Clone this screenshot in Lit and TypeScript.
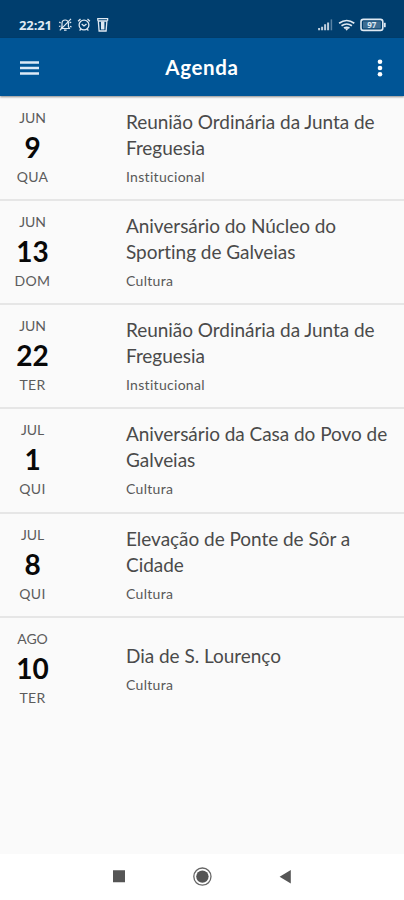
import { LitElement, html, css } from "lit";
import { customElement } from "lit/decorators.js";

interface AgendaEvent {
  month: string;
  day: string;
  weekday: string;
  title: string[];
  category: string;
}

const EVENTS: AgendaEvent[] = [
  { month: "JUN", day: "9", weekday: "QUA", title: ["Reunião Ordinária da Junta de", "Freguesia"], category: "Institucional" },
  { month: "JUN", day: "13", weekday: "DOM", title: ["Aniversário do Núcleo do", "Sporting de Galveias"], category: "Cultura" },
  { month: "JUN", day: "22", weekday: "TER", title: ["Reunião Ordinária da Junta de", "Freguesia"], category: "Institucional" },
  { month: "JUL", day: "1", weekday: "QUI", title: ["Aniversário da Casa do Povo de", "Galveias"], category: "Cultura" },
  { month: "JUL", day: "8", weekday: "QUI", title: ["Elevação de Ponte de Sôr a", "Cidade"], category: "Cultura" },
  { month: "AGO", day: "10", weekday: "TER", title: ["Dia de S. Lourenço"], category: "Cultura" },
];

@customElement("status-bar")
class StatusBar extends LitElement {
  static styles = css`
    :host {
      display: flex;
      justify-content: space-between;
      height: 38px;
      padding: 11px 17px 0 19px;
      box-sizing: border-box;
      background: #003e6e;
      color: #dfe9f2;
    }
    .group { display: flex; align-items: center; height: 27px; }
    .time { width: 39px; font: 700 13px/26px "Open Sans", sans-serif; letter-spacing: -0.1px; }
    svg { display: block; fill: none; stroke: currentColor; }
    .battery-text { font: 700 8px "Open Sans", sans-serif; fill: currentColor; stroke: none; }
  `;
  render() {
    return html`
      <div class="group">
        <span class="time">22:21</span>
        <svg width="52" height="16" viewBox="0 0 52 16">
          <g stroke-width="1.2">
            <path d="M3.2 11.5h8.2l-1-2V6.2a3.2 3.2 0 0 0-6.4 0v3.3zM6 13.2h2.6M1.2 5l1.4 1M1 9.5l1.5-.5M13.2 5l-1.6 1M13.6 10l-1.6-.6M13 1.8L1.8 13.4"></path>
          </g>
          <g stroke-width="1.3">
            <circle cx="26" cy="8" r="4.9"></circle>
            <path d="M20.1 4.2l2.4-2.2M31.9 4.2l-2.4-2.2M23.7 7l2.3 2 2.5-2M22.7 12l-1 1.6M29.3 12l1 1.6"></path>
          </g>
          <g stroke-width="1.3">
            <path d="M39.8 3.8V1.7h9.8v2.1M40.3 4l.8 10h7l.8-10z"></path>
            <path d="M44.7 4.5v8" stroke-width="3.4"></path>
          </g>
        </svg>
      </div>
      <div class="group">
        <svg width="70" height="16" viewBox="0 0 70 16">
          <path d="M2.1 13.3v-2.2M5.1 13.3V9.7M8.1 13.3V7.3M11.1 13.3V5.4" stroke-width="2" opacity=".85"></path>
          <path d="M14.4 13.3V2.4" stroke-width="1.5" opacity=".4"></path>
          <path d="M22.1 6.3q7.6-5.6 15.2 0M24.5 8.8q5.2-3.6 10.4 0M26.9 11.1q2.8-1.6 5.6 0" stroke-width="1.7"></path>
          <path d="M27.8 11.2l1.9 2.5 1.9-2.5z" fill="currentColor" stroke="none"></path>
          <rect x="44" y="2.4" width="21.8" height="11" rx="2.4" stroke-width="1.6"></rect>
          <path d="M67.8 5.8v4.4" stroke-width="1.8"></path>
          <rect x="46" y="4.4" width="17.8" height="7" fill="currentColor" stroke="none" opacity=".28"></rect>
          <text class="battery-text" x="50.2" y="10.9">97</text>
        </svg>
      </div>
    `;
  }
}

@customElement("app-bar")
class AppBar extends LitElement {
  static styles = css`
    :host {
      display: grid;
      grid-template-columns: 60px 1fr 60px;
      align-items: center;
      height: 58px;
      background: #005596;
      color: #fff;
      box-shadow: 0 1px 2px rgba(0, 0, 0, 0.45);
      z-index: 1;
    }
    svg { display: block; }
    .menu { margin: 1px 0 0 20px; }
    .more { justify-self: end; margin: 1px 20px 0 0; }
    h1 { margin: 0; text-align: center; font: 700 20.5px/58px Lato, sans-serif; letter-spacing: 0.65px; }
  `;
  render() {
    return html`
      <svg class="menu" width="20" height="14" viewBox="0 0 20 14">
        <path d="M0 1.4h19M0 7h19M0 12.6h19" stroke="#dce9f6" stroke-width="2.5"></path>
      </svg>
      <h1>Agenda</h1>
      <svg class="more" width="8" height="18" viewBox="0 0 8 18" fill="#fff">
        <circle cx="4" cy="2.8" r="2.3"></circle>
        <circle cx="4" cy="9" r="2.3"></circle>
        <circle cx="4" cy="15.2" r="2.3"></circle>
      </svg>
    `;
  }
}

@customElement("app-root")
class AppRoot extends LitElement {
  static styles = css`
    :host {
      display: flex;
      flex-direction: column;
      width: 404px;
      height: 900px;
      overflow: hidden;
      background: #fafafa;
      font-family: Lato, sans-serif;
    }
    .list { flex: 1; padding-top: 1px; }
    .row {
      display: grid;
      grid-template-columns: 65px 1fr;
      column-gap: 61px;
      align-items: center;
      height: 104.15px;
      box-sizing: border-box;
      border-bottom: 2px solid #e6e6e6;
    }
    .row:last-child { border-bottom-color: transparent; }
    .date { text-align: center; color: #5c5c5c; font-size: 14px; line-height: 20px; margin-top: -1px; }
    .month, .weekday { letter-spacing: -0.1px; }
    .weekday { letter-spacing: 0.3px; }
    .day { color: #080808; font-size: 28px; font-weight: 700; line-height: 39px; }
    .title { color: #4a4a4a; font-size: 19px; line-height: 26px; white-space: nowrap; letter-spacing: -0.04px; }
    .category { margin-top: 6px; color: #585858; font-size: 14px; line-height: 20px; letter-spacing: 0.3px; }
    .nav {
      display: flex;
      justify-content: center;
      align-items: center;
      height: 46px;
      background: #fff;
    }
  `;
  render() {
    return html`
      <status-bar></status-bar>
      <app-bar></app-bar>
      <div class="list">
        ${EVENTS.map((e) => html`
          <div class="row">
            <div class="date">
              <div class="month">${e.month}</div>
              <div class="day">${e.day}</div>
              <div class="weekday">${e.weekday}</div>
            </div>
            <div>
              ${e.title.map((line) => html`<div class="title">${line}</div>`)}
              <div class="category">${e.category}</div>
            </div>
          </div>
        `)}
      </div>
      <div class="nav">
        <svg width="180" height="20" viewBox="0 0 180 20" fill="#555">
          <path d="M1 3.2h12v12H1zM178.8 3v13.6L167.6 9.8z"></path>
          <circle cx="90.4" cy="9.6" r="8.6" fill="none" stroke="#666" stroke-width="1.3"></circle>
          <circle cx="90.4" cy="9.6" r="6.2"></circle>
        </svg>
      </div>
    `;
  }
}
